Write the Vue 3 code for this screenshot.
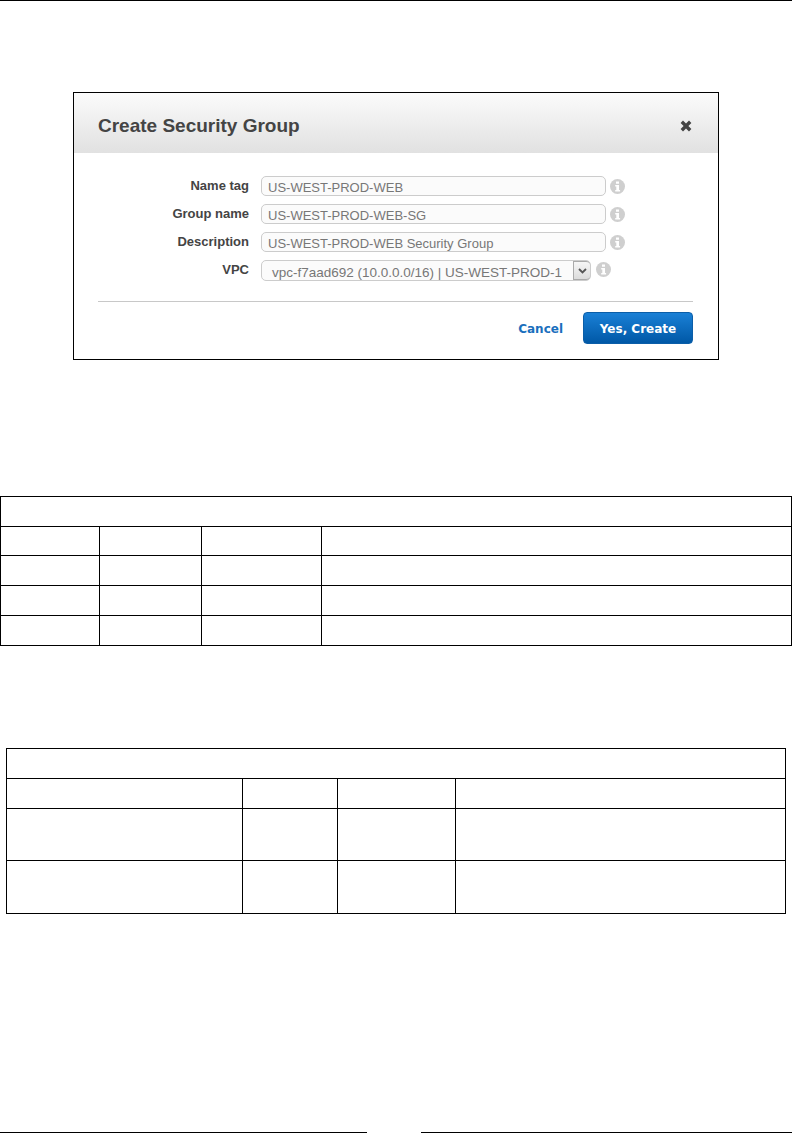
<script setup>
const fields = [
  { label: 'Name tag', value: 'US-WEST-PROD-WEB' },
  { label: 'Group name', value: 'US-WEST-PROD-WEB-SG' },
  { label: 'Description', value: 'US-WEST-PROD-WEB Security Group' }
]

const tables = [
  { cls: 'grid-a', cols: [99, 102, 120, 470], rows: [30, 29, 30, 30, 30] },
  { cls: 'grid-b', cols: [236, 95, 118, 330], rows: [30, 30, 52, 53] }
]
</script>

<template>
  <div class="page">
    <div class="top-rule"></div>

    <section class="dialog">
      <header class="dialog-head">
        <h2>Create Security Group</h2>
        <svg class="close" width="12" height="12" viewBox="0 0 12 12">
          <path d="M.6 3 3 .6 6 3.6 9 .6 11.4 3 8.4 6 11.4 9 9 11.4 6 8.4 3 11.4.6 9 3.6 6Z" fill="#444" />
        </svg>
      </header>

      <div class="dialog-body">
        <div v-for="f in fields" :key="f.label" class="row">
          <label>{{ f.label }}</label>
          <div class="input">{{ f.value }}</div>
          <svg class="info" width="15" height="15" viewBox="0 0 15 15">
            <circle cx="7.5" cy="7.5" r="7.5" fill="#cfcfcf" />
            <path d="M6 2.4h3v2.4H6ZM5.2 6h3.8v5h1.1v1.6H5.2V11h1.1V7.6H5.2Z" fill="#fff" />
          </svg>
        </div>
        <div class="row row-select">
          <label>VPC</label>
          <div class="select">
            <span>vpc-f7aad692 (10.0.0.0/16) | US-WEST-PROD-1</span>
            <div class="arrow">
              <svg width="9" height="6" viewBox="0 0 9 6">
                <path d="M1 1 4.5 4.5 8 1" fill="none" stroke="#555" stroke-width="1.8" />
              </svg>
            </div>
          </div>
          <svg class="info" width="15" height="15" viewBox="0 0 15 15">
            <circle cx="7.5" cy="7.5" r="7.5" fill="#cfcfcf" />
            <path d="M6 2.4h3v2.4H6ZM5.2 6h3.8v5h1.1v1.6H5.2V11h1.1V7.6H5.2Z" fill="#fff" />
          </svg>
        </div>

        <div class="divider"></div>

        <div class="actions">
          <a class="cancel">Cancel</a>
          <button class="create">Yes, Create</button>
        </div>
      </div>
    </section>

    <table v-for="t in tables" :key="t.cls" :class="t.cls">
      <colgroup>
        <col v-for="(w, i) in t.cols" :key="i" :style="{ width: w + 'px' }" />
      </colgroup>
      <tbody>
        <template v-for="(h, r) in t.rows" :key="r">
          <tr v-if="r === 0">
            <td :colspan="t.cols.length" :style="{ height: h + 'px' }"></td>
          </tr>
          <tr v-else>
            <td v-for="(w, i) in t.cols" :key="i" :style="{ height: h + 'px' }"></td>
          </tr>
        </template>
      </tbody>
    </table>

    <div class="foot-rule">
      <span></span>
      <span></span>
    </div>
  </div>
</template>

<style>
html, body { margin: 0; background: #fff; }
</style>

<style scoped>
.page {
  width: 792px;
  height: 1142px;
  position: relative;
  overflow: hidden;
  background: #fff;
  font-family: "Liberation Sans", Arial, sans-serif;
}
.top-rule { height: 1px; background: #000; }

.dialog {
  box-sizing: border-box;
  width: 646px;
  height: 268px;
  margin: 91px 0 0 73px;
  border: 1px solid #000;
}
.dialog-head {
  box-sizing: border-box;
  height: 60px;
  padding: 6px 26px 0 24px;
  display: flex;
  align-items: center;
  justify-content: space-between;
  background: linear-gradient(#fbfbfb, #e1e1e1);
}
.dialog-head h2 {
  margin: 0;
  font-size: 19px;
  font-weight: bold;
  color: #444;
}

.dialog-body { padding: 23px 25px 0 24px; }
.row {
  height: 20px;
  margin-bottom: 8px;
  display: flex;
  align-items: center;
}
.row label {
  width: 151px;
  text-align: right;
  font-size: 13px;
  font-weight: bold;
  color: #444;
  margin-right: 12px;
  padding-bottom: 2px;
}
.input {
  box-sizing: border-box;
  width: 345px;
  height: 20px;
  padding: 3px 0 0 6px;
  border: 1px solid #ccc;
  border-radius: 5px;
  background: #fbfbfb;
  font-size: 13px;
  line-height: 16px;
  color: #777;
  white-space: nowrap;
}
.info { margin-left: 4px; flex: none; }
.row-select { height: 21px; margin-bottom: 0; }
.select {
  box-sizing: border-box;
  width: 330px;
  height: 21px;
  padding: 0 0 0 10px;
  border: 1px solid #ccc;
  border-radius: 5px;
  background: #fbfbfb;
  display: flex;
  align-items: center;
  justify-content: space-between;
  font-size: 13.5px;
  color: #777;
  white-space: nowrap;
}
.select span { padding-top: 4px; }
.arrow {
  box-sizing: border-box;
  width: 17px;
  height: 19px;
  border: 1px solid #aaa;
  border-right: 0;
  border-radius: 0 4px 4px 0;
  background: linear-gradient(#f6f6f6, #dcdcdc);
  display: flex;
  align-items: center;
  justify-content: center;
}
.row-select .info { margin-left: 5px; margin-bottom: 2px; }

.divider { height: 1px; background: #c8c8c8; margin-top: 20px; }
.actions {
  margin-top: 10px;
  display: flex;
  justify-content: flex-end;
  align-items: center;
  gap: 20px;
}
.cancel {
  padding-top: 2px;
  font-family: "DejaVu Sans", Verdana, sans-serif;
  font-size: 12px;
  font-weight: bold;
  color: #1a6fbd;
}
.create {
  box-sizing: border-box;
  width: 110px;
  height: 32px;
  padding: 2px 0 0;
  border: 1px solid #0b5ea8;
  border-radius: 4px;
  background: linear-gradient(#1a80d6, #0058a6);
  font-family: "DejaVu Sans", Verdana, sans-serif;
  font-size: 12px;
  font-weight: bold;
  color: #fff;
}

table {
  table-layout: fixed;
  border-collapse: separate;
  border-spacing: 0;
  border-top: 1px solid #000;
  border-left: 1px solid #000;
}
td {
  box-sizing: border-box;
  padding: 0;
  border-right: 1px solid #000;
  border-bottom: 1px solid #000;
}
.grid-a { width: 792px; margin-top: 136px; }
.grid-b { width: 780px; margin: 102px 0 0 6px; }

.foot-rule {
  margin-top: 218px;
  display: flex;
  justify-content: space-between;
}
.foot-rule span { height: 1px; background: #000; }
.foot-rule span:first-child { width: 367px; }
.foot-rule span:last-child { width: 371px; }
</style>
